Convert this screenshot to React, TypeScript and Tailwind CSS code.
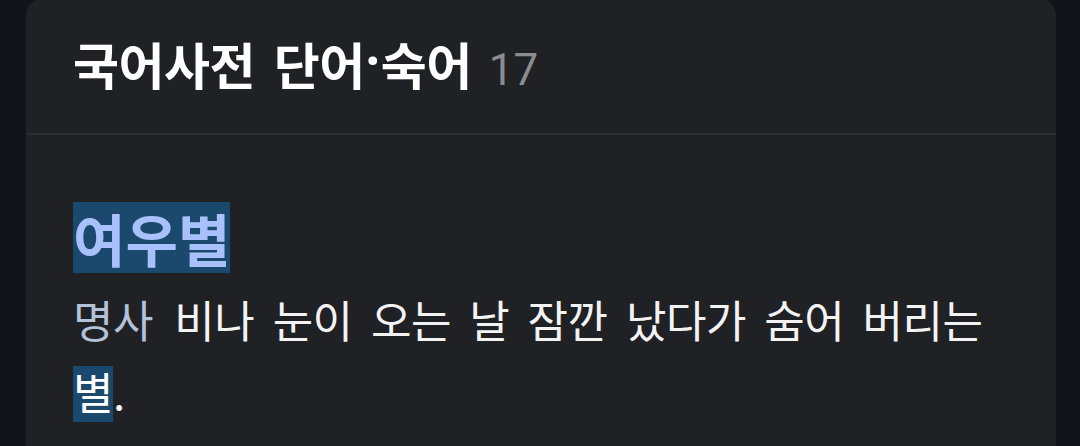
import React from "react";

const KR = { fontFamily: '"Noto Sans CJK KR", "Noto Sans", sans-serif' };

export default function App() {
  return (
    <div className="h-[446px] w-[1080px] overflow-hidden bg-[#11141a]" style={KR}>
      <div className="ml-[26px] -mt-[2px] h-[470px] w-[1030px] rounded-t-[18px] bg-[#1f2125]">
        <div className="flex h-[135px] items-baseline pl-[47px] pt-[32px]">
          <span className="text-[50px] font-bold leading-[60px] tracking-[-0.5px] text-white [word-spacing:8px]">
            국어사전 단어
            <span
              className="inline-block w-[16px] text-center align-[6px] tracking-normal"
              style={{ fontFamily: '"Noto Sans", "Liberation Sans", sans-serif' }}
            >
              ·
            </span>
            숙어
          </span>
          <span
            className="ml-[17px] text-[44px] leading-[60px] text-[#8b8d91]"
            style={{ fontFamily: 'Roboto, "Noto Sans", sans-serif' }}
          >
            17
          </span>
        </div>
        <div className="h-[2px] bg-[#2b2d31]" />
        <div className="px-[47px] pt-[67px]">
          <div className="flex">
            <span className="inline-block h-[71px] bg-[#1b496d] text-[57px] font-bold leading-[71px] text-[#a9c1fb]">
              여우별
            </span>
          </div>
          <div className="mt-[10px] text-[44px] leading-[72px] tracking-[-0.5px] text-[#f3f3f3] [word-spacing:9px]">
            <span className="mr-[3px] text-[#b3c1d9]">명사</span> 비나 눈이 오는 날 잠깐 났다가 숨어 버리는{" "}
            <span className="inline-block h-[56px] bg-[#1b496d] leading-[50px] text-white">별</span>.
          </div>
        </div>
      </div>
    </div>
  );
}
